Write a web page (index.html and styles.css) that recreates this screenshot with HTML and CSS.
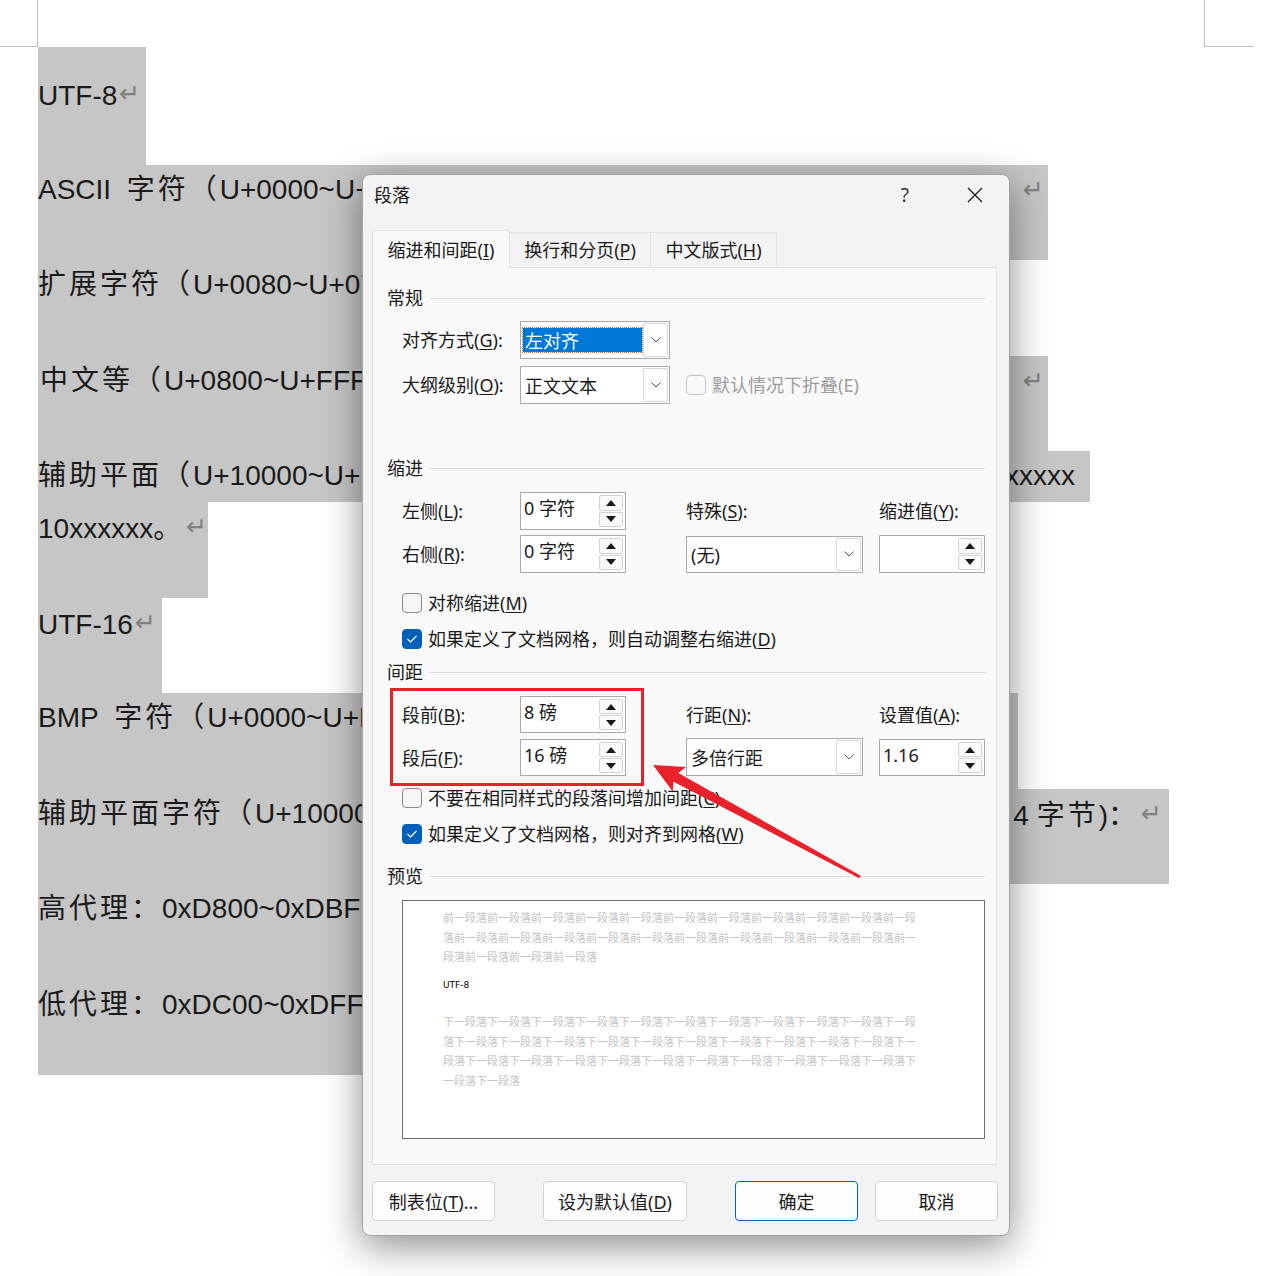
FILE: index.html
```html
<!DOCTYPE html>
<html lang="zh-CN">
<head>
    <meta charset="UTF-8">
    <title>段落</title>
    <link rel="stylesheet" href="styles.css">
</head>
<body>
<div class="page">
    <div class="crop crop-left"></div>
    <div class="crop crop-right"></div>

    <div class="doc">
        <div class="para first p-utf8"><span class="txt">UTF-8<span class="mark">↵</span></span></div>
        <div class="para p-ascii"><span class="txt">ASCII&nbsp; <span class="cjk">字符（</span>U+0000~U+007F<span class="cjk">）：</span>1 <span class="cjk">字节，</span>0xxxxxxx</span><span class="tail t-mark"><span class="mark">↵</span></span></div>
        <div class="para p-ext"><span class="txt"><span class="cjk">扩展字符（</span>U+0080~U+07FF<span class="cjk">）：</span>2 <span class="cjk">字节，</span>110xxxxx 10xxxxxx</span></div>
        <div class="para p-cn"><span class="txt"><span class="cjk">中文等（</span>U+0800~U+FFFF<span class="cjk">）：</span>3 <span class="cjk">字节，</span>1110xxxx 10xxxxxx</span><span class="tail t-mark"><span class="mark">↵</span></span></div>
        <div class="para line p-sup"><span class="txt"><span class="cjk">辅助平面（</span>U+10000~U+10FFFF<span class="cjk">）：</span>4 <span class="cjk">字节，</span>11110xxx 10xxxxxx 10</span><span class="tail t-x">xxxxx</span></div>
        <div class="para p-sup2"><span class="txt">10xxxxxx<span class="cjk">。</span><span class="mark">↵</span></span></div>
        <div class="para p-utf16"><span class="txt">UTF-16<span class="mark">↵</span></span></div>
        <div class="para p-bmp"><span class="txt">BMP&nbsp; <span class="cjk">字符（</span>U+0000~U+FFFF<span class="cjk">）：</span>2 <span class="cjk">字节</span></span></div>
        <div class="para p-sup3"><span class="txt"><span class="cjk">辅助平面字符（</span>U+10000~U+10FFFF<span class="cjk">）：</span></span><span class="tail t-bytes">4 <span class="cjk">字节</span>)<span class="cjk">：</span><span class="mark">↵</span></span></div>
        <div class="para p-hi"><span class="txt"><span class="cjk">高代理：</span>0xD800~0xDBFF</span></div>
        <div class="para p-lo"><span class="txt"><span class="cjk">低代理：</span>0xDC00~0xDFFF</span></div>
    </div>

    <div class="dialog">
        <div class="titlebar">
            <span class="title">段落</span>
            <span class="help">?</span>
            <svg class="close" width="16" height="16" viewBox="0 0 16 16"><path d="M1 1 L15 15 M15 1 L1 15" stroke="#1a1a1a" stroke-width="1.3" fill="none"/></svg>
        </div>

        <div class="tabs">
            <div class="tab active">缩进和间距(<u>I</u>)</div>
            <div class="tab tab2">换行和分页(<u>P</u>)</div>
            <div class="tab tab3">中文版式(<u>H</u>)</div>
        </div>

        <div class="panel">
            <div class="head head-general"><span>常规</span><i></i></div>
            <div class="row row-first">
                <span class="label">对齐方式(<u>G</u>):</span>
                <div class="select sel-align focused">
                    <span class="value">左对齐</span>
                    <span class="drop"><svg width="10" height="6" viewBox="0 0 10 6"><path d="M0.5 0.5 L5 5 L9.5 0.5" fill="none" stroke="#555" stroke-width="1"/></svg></span>
                </div>
            </div>
            <div class="row row-second">
                <span class="label">大纲级别(<u>O</u>):</span>
                <div class="select sel-align">
                    <span class="value">正文文本</span>
                    <span class="drop"><svg width="10" height="6" viewBox="0 0 10 6"><path d="M0.5 0.5 L5 5 L9.5 0.5" fill="none" stroke="#555" stroke-width="1"/></svg></span>
                </div>
                <span class="check disabled"><span class="box"></span>默认情况下折叠(E)</span>
            </div>

            <div class="head head-indent"><span>缩进</span><i></i></div>
            <div class="grid grid-indent">
                <span class="label">左侧(<u>L</u>):</span>
                <div class="spin">
                    <span class="spin-val">0 字符</span>
                    <span class="spin-btns">
                        <span class="spin-btn"><svg width="10" height="6" viewBox="0 0 10 6"><path d="M5 0 L10 6 L0 6Z" fill="#1a1a1a"/></svg></span>
                        <span class="spin-btn"><svg width="10" height="6" viewBox="0 0 10 6"><path d="M0 0 L10 0 L5 6Z" fill="#1a1a1a"/></svg></span>
                    </span>
                </div>
                <span class="label">特殊(<u>S</u>):</span>
                <span class="label">缩进值(<u>Y</u>):</span>

                <span class="label">右侧(<u>R</u>):</span>
                <div class="spin">
                    <span class="spin-val">0 字符</span>
                    <span class="spin-btns">
                        <span class="spin-btn"><svg width="10" height="6" viewBox="0 0 10 6"><path d="M5 0 L10 6 L0 6Z" fill="#1a1a1a"/></svg></span>
                        <span class="spin-btn"><svg width="10" height="6" viewBox="0 0 10 6"><path d="M0 0 L10 0 L5 6Z" fill="#1a1a1a"/></svg></span>
                    </span>
                </div>
                <div class="select sel-wide">
                    <span class="value">(无)</span>
                    <span class="drop"><svg width="10" height="6" viewBox="0 0 10 6"><path d="M0.5 0.5 L5 5 L9.5 0.5" fill="none" stroke="#555" stroke-width="1"/></svg></span>
                </div>
                <div class="spin">
                    <span class="spin-val"></span>
                    <span class="spin-btns">
                        <span class="spin-btn"><svg width="10" height="6" viewBox="0 0 10 6"><path d="M5 0 L10 6 L0 6Z" fill="#1a1a1a"/></svg></span>
                        <span class="spin-btn"><svg width="10" height="6" viewBox="0 0 10 6"><path d="M0 0 L10 0 L5 6Z" fill="#1a1a1a"/></svg></span>
                    </span>
                </div>
            </div>
            <div class="check cb-mirror"><span class="box"></span>对称缩进(<u>M</u>)</div>
            <div class="check cb-next"><span class="box checked"><svg width="12" height="10" viewBox="0 0 12 10"><path d="M1.5 5 L4.5 8 L10.5 2" fill="none" stroke="#fff" stroke-width="1.2"/></svg></span>如果定义了文档网格，则自动调整右缩进(<u>D</u>)</div>

            <div class="head head-spacing"><span>间距</span><i></i></div>
            <div class="grid grid-spacing">
                <span class="label">段前(<u>B</u>):</span>
                <div class="spin">
                    <span class="spin-val">8 磅</span>
                    <span class="spin-btns">
                        <span class="spin-btn"><svg width="10" height="6" viewBox="0 0 10 6"><path d="M5 0 L10 6 L0 6Z" fill="#1a1a1a"/></svg></span>
                        <span class="spin-btn"><svg width="10" height="6" viewBox="0 0 10 6"><path d="M0 0 L10 0 L5 6Z" fill="#1a1a1a"/></svg></span>
                    </span>
                </div>
                <span class="label">行距(<u>N</u>):</span>
                <span class="label">设置值(<u>A</u>):</span>

                <span class="label">段后(<u>F</u>):</span>
                <div class="spin">
                    <span class="spin-val">16 磅</span>
                    <span class="spin-btns">
                        <span class="spin-btn"><svg width="10" height="6" viewBox="0 0 10 6"><path d="M5 0 L10 6 L0 6Z" fill="#1a1a1a"/></svg></span>
                        <span class="spin-btn"><svg width="10" height="6" viewBox="0 0 10 6"><path d="M0 0 L10 0 L5 6Z" fill="#1a1a1a"/></svg></span>
                    </span>
                </div>
                <div class="select sel-wide sel-tall">
                    <span class="value">多倍行距</span>
                    <span class="drop"><svg width="10" height="6" viewBox="0 0 10 6"><path d="M0.5 0.5 L5 5 L9.5 0.5" fill="none" stroke="#555" stroke-width="1"/></svg></span>
                </div>
                <div class="spin">
                    <span class="spin-val">1.16</span>
                    <span class="spin-btns">
                        <span class="spin-btn"><svg width="10" height="6" viewBox="0 0 10 6"><path d="M5 0 L10 6 L0 6Z" fill="#1a1a1a"/></svg></span>
                        <span class="spin-btn"><svg width="10" height="6" viewBox="0 0 10 6"><path d="M0 0 L10 0 L5 6Z" fill="#1a1a1a"/></svg></span>
                    </span>
                </div>
            </div>
            <div class="check cb-same"><span class="box"></span>不要在相同样式的段落间增加间距(<u>C</u>)</div>
            <div class="check cb-next"><span class="box checked"><svg width="12" height="10" viewBox="0 0 12 10"><path d="M1.5 5 L4.5 8 L10.5 2" fill="none" stroke="#fff" stroke-width="1.2"/></svg></span>如果定义了文档网格，则对齐到网格(<u>W</u>)</div>

            <div class="head head-preview"><span>预览</span><i></i></div>
            <div class="preview">
                <p class="pv-ghost">前一段落前一段落前一段落前一段落前一段落前一段落前一段落前一段落前一段落前一段落前一段落前一段落前一段落前一段落前一段落前一段落前一段落前一段落前一段落前一段落前一段落前一段落前一段落前一段落前一段落</p>
                <p class="pv-main">UTF-8</p>
                <p class="pv-ghost pv-after">下一段落下一段落下一段落下一段落下一段落下一段落下一段落下一段落下一段落下一段落下一段落下一段落下一段落下一段落下一段落下一段落下一段落下一段落下一段落下一段落下一段落下一段落下一段落下一段落下一段落下一段落下一段落下一段落下一段落下一段落下一段落下一段落下一段落下一段落</p>
            </div>

            <div class="red-box"></div>
        </div>

        <div class="buttons">
            <button class="btn btn-tabs">制表位(<u>T</u>)...</button>
            <button class="btn btn-default">设为默认值(<u>D</u>)</button>
            <button class="btn btn-ok">确定</button>
            <button class="btn btn-cancel">取消</button>
        </div>
    </div>

    <svg class="arrow" width="1277" height="1276" viewBox="0 0 1277 1276">
        <polygon points="653,765 686.1,767 678.3,773 860.7,875.7 859.3,878.3 673.5,781.8 672.7,791.6" fill="#e8212b"/>
    </svg>
</div>
</body>
</html>
```

FILE: styles.css
```css
body {
    margin: 0;
    background-color: #fff;
}

.page {
    position: relative;
    width: 1277px;
    height: 1276px;
    overflow: hidden;
}

/* page corner marks */
.crop {
    position: absolute;
    top: 0;
    height: 46px;
    border-bottom: 1px solid #bdbdbd;
}

.crop-left {
    left: 0;
    width: 37px;
    border-right: 1px solid #bdbdbd;
}

.crop-right {
    left: 1204px;
    width: 49px;
    border-left: 1px solid #bdbdbd;
}

/* document behind the dialog */
.doc {
    padding: 47px 0 0 38px;
    font-family: "Liberation Sans", "Noto Sans CJK SC", sans-serif;
    font-size: 28px;
    color: #1a1a1a;
}

.cjk {
    letter-spacing: 3px;
}

.para {
    display: flex;
    justify-content: space-between;
    background-color: #c6c6c6;
    line-height: 50px;
    height: 50px;
    padding-bottom: 45.5px;
    white-space: nowrap;
    overflow: hidden;
}

.para.first {
    padding-top: 22px;
}

.para.line {
    padding-bottom: 1px;
}

.txt {
    flex: 1;
    min-width: 0;
    overflow: hidden;
}

.tail {
    flex: none;
}

.mark {
    color: #808080;
    font-family: "DejaVu Sans", sans-serif;
    font-size: 25px;
    letter-spacing: 0;
    vertical-align: 3px;
    margin-left: 2px;
}

.t-mark { padding-right: 4px; }
.t-x { padding-right: 15px; }
.t-bytes { padding-right: 7px; }

.p-utf8 { width: 108px; }
.p-ascii { width: 1010px; }
.p-ext { width: 962px; }
.p-cn { width: 1008px; padding-left: 2px; }
.p-sup { width: 1052px; }
.p-sup2 { width: 170px; }
.p-utf16 { width: 124px; }
.p-bmp { width: 980px; }
.p-sup3 { width: 1131px; }
.p-hi { width: 962px; }
.p-lo { width: 962px; }

/* dialog */
.dialog {
    position: absolute;
    left: 362px;
    top: 174px;
    width: 648px;
    height: 1062px;
    box-sizing: border-box;
    border: 1px solid #a3a3a3;
    border-radius: 8px;
    background-color: #f3f3f3;
    box-shadow: 0 10px 38px rgba(0, 0, 0, 0.45);
    display: flex;
    flex-direction: column;
    font-family: "Noto Sans", "Noto Sans CJK SC", sans-serif;
    font-size: 18px;
    color: #1a1a1a;
}

.dialog u {
    text-underline-offset: 2px;
}

.titlebar {
    height: 40px;
    display: flex;
    align-items: center;
    padding: 0 26px 0 11px;
}

.title {
    flex: 1;
    line-height: 22px;
}

.help {
    font-size: 19px;
    color: #333;
    margin-right: 58px;
}

.tabs {
    display: flex;
    align-items: flex-end;
    padding: 15px 0 0 9px;
    height: 37px;
}

.tab {
    box-sizing: border-box;
    height: 35px;
    border: 1px solid #e3e3e3;
    border-bottom: none;
    background-color: #f3f3f3;
    display: flex;
    align-items: center;
    justify-content: center;
    line-height: 22px;
}

.tab.active {
    width: 138px;
    height: 38px;
    margin-bottom: -1px;
    background-color: #f9f9f9;
    position: relative;
    z-index: 1;
    border-radius: 3px 3px 0 0;
}

.tab2 {
    width: 141px;
    border-left: none;
}

.tab3 {
    width: 126px;
    border-left: none;
}

.panel {
    position: relative;
    box-sizing: border-box;
    width: 625px;
    height: 898px;
    margin-left: 9px;
    border: 1px solid #e3e3e3;
    background-color: #f9f9f9;
    padding: 0 11px 0 14px;
}

.head {
    display: flex;
    align-items: center;
    height: 22px;
    line-height: 22px;
}

.head i {
    flex: 1;
    height: 1px;
    background-color: #dcdcdc;
    margin-left: 7px;
}

.head-general { margin-top: 19px; }
.head-indent { margin-top: 53px; }
.head-spacing { margin-top: 9px; }
.head-preview { margin-top: 18px; }

.label {
    line-height: 22px;
    white-space: nowrap;
}

.row {
    display: flex;
    align-items: center;
    height: 38px;
    margin-left: 15px;
}

.row .label {
    width: 118px;
}

.row-first { margin-top: 12px; }
.row-second { margin-top: 7px; }

.select {
    box-sizing: border-box;
    height: 100%;
    border: 1px solid #a8a8a8;
    background-color: #fff;
    display: flex;
}

.sel-align {
    width: 150px;
}

.sel-wide {
    width: 177px;
    height: 37px;
}

.sel-tall {
    height: 38px;
    margin-top: -1px;
}

.value {
    flex: 1;
    padding-left: 4px;
    display: flex;
    align-items: center;
    white-space: nowrap;
}

.select.focused .value {
    margin: 6px 0 6px 2px;
    padding-left: 2px;
    background-color: #0078d7;
    color: #fff;
    outline: 1px dotted #b0703a;
}

.drop {
    box-sizing: border-box;
    width: 25px;
    margin: 1px;
    border: 1px solid #d6d6d6;
    border-radius: 2px;
    display: flex;
    align-items: center;
    justify-content: center;
}

.check {
    display: flex;
    align-items: center;
    height: 26px;
    line-height: 22px;
    white-space: nowrap;
}

.row .check {
    margin-left: 16px;
}

.box {
    box-sizing: border-box;
    width: 20px;
    height: 20px;
    margin-right: 6px;
    border: 1px solid #8a8a8a;
    border-radius: 4px;
    background-color: #f6f6f6;
    display: flex;
    align-items: center;
    justify-content: center;
}

.box.checked {
    border-color: #005fb8;
    background-color: #005fb8;
}

.check.disabled {
    color: #9d9d9d;
}

.check.disabled .box {
    border-color: #c8c8c8;
    background-color: #f9f9f9;
}

.cb-mirror,
.cb-same,
.cb-next {
    margin-left: 15px;
}

.cb-mirror { margin-top: 17px; }
.cb-same { margin-top: 9px; }
.cb-next { margin-top: 10px; }

.grid {
    display: grid;
    grid-template-columns: 118px 166px 193px 106px;
    align-items: center;
    margin-left: 15px;
    margin-top: 13px;
}

.grid-indent {
    grid-template-rows: 38px 38px;
    row-gap: 5px;
}

.grid-spacing {
    grid-template-rows: 37px 37px;
    row-gap: 6px;
}

.spin {
    box-sizing: border-box;
    width: 106px;
    height: 100%;
    border: 1px solid #a8a8a8;
    background-color: #fff;
    display: flex;
}

.spin-val {
    flex: 1;
    padding-left: 3px;
    line-height: 30px;
    white-space: nowrap;
}

.spin-btns {
    width: 24px;
    display: flex;
    flex-direction: column;
    gap: 1px;
    padding: 2px 2px 2px 0;
}

.spin-btn {
    flex: 1;
    border: 1px solid #d2d2d2;
    border-radius: 2px;
    background-color: #fafafa;
    display: flex;
    align-items: center;
    justify-content: center;
}

.preview {
    box-sizing: border-box;
    width: 583px;
    height: 239px;
    margin: 13px 0 0 15px;
    border: 1px solid #6e6e6e;
    background-color: #fff;
    padding: 7px 0 0 40px;
}

.preview p {
    margin: 0;
    width: 474px;
    word-break: break-all;
}

.pv-ghost {
    font-family: "Noto Sans CJK SC", sans-serif;
    font-size: 11px;
    line-height: 19.5px;
    color: #c4c4c4;
}

.pv-main {
    margin-top: 9px !important;
    font-family: "DejaVu Sans", sans-serif;
    font-size: 9px;
    line-height: 19.5px;
    color: #000;
}

.pv-after {
    margin-top: 17px !important;
}

/* annotation box over the spacing fields */
.red-box {
    position: absolute;
    left: 17px;
    top: 420px;
    width: 248px;
    height: 92px;
    border: 3px solid #e8212b;
}

.buttons {
    display: flex;
    padding: 16px 0 0 9px;
}

.btn {
    box-sizing: border-box;
    height: 40px;
    border: 1px solid #d2d2d2;
    border-radius: 4px;
    background-color: #fdfdfd;
    font-family: "Noto Sans", "Noto Sans CJK SC", sans-serif;
    font-size: 18px;
    color: #1a1a1a;
    padding: 0;
}

.btn-tabs { width: 123px; }
.btn-default { width: 144px; margin-left: 48px; }
.btn-ok { width: 123px; margin-left: 48px; border-color: #0067c0; }
.btn-cancel { width: 123px; margin-left: 17px; }

.arrow {
    position: absolute;
    left: 0;
    top: 0;
    pointer-events: none;
}
```
